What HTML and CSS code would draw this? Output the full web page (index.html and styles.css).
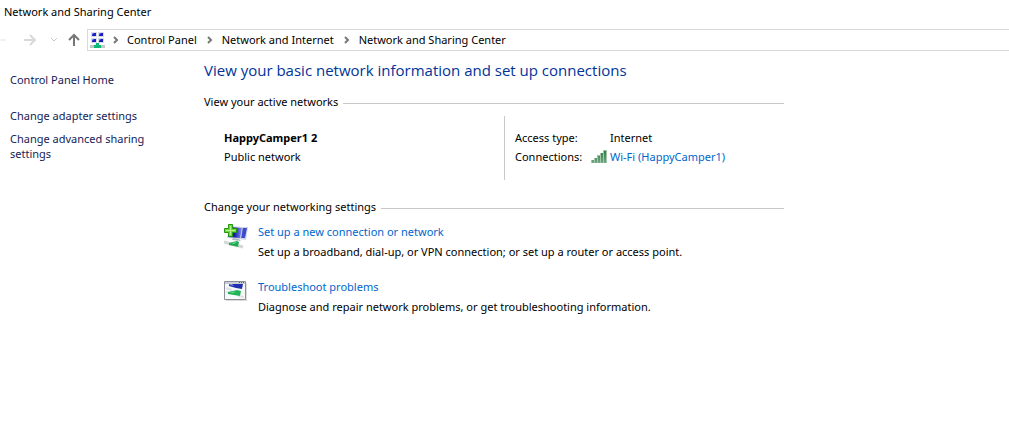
FILE: index.html
```html
<!DOCTYPE html>
<html lang="en">
<head>
<meta charset="utf-8">
<title>Network and Sharing Center</title>
<link rel="stylesheet" href="styles.css">
</head>
<body>
<header class="titlebar">Network and Sharing Center</header>
<div class="toolbar">
  <button class="nav back" aria-label="Back"><svg width="14" height="14" viewBox="0 0 14 14"><path d="M1 7h12"/></svg></button>
  <button class="nav forward" aria-label="Forward"><svg width="14" height="14" viewBox="0 0 14 14"><path d="M7 2l5 5-5 5M1 7h11"/></svg></button>
  <button class="nav recent" aria-label="Recent locations"><svg width="8" height="6" viewBox="0 0 8 6"><path d="M1 1l3 3 3-3"/></svg></button>
  <button class="nav up" aria-label="Up"><svg width="14" height="14" viewBox="0 0 14 14"><path d="M2 7l5-5 5 5M7 2v11"/></svg></button>
  <nav class="address" aria-label="Address">
    <svg class="place" width="16" height="17" viewBox="0 0 16 17">
      <path fill="#d7dbe8" d="M1 0h6v5H1zM8 0h6v5H8zM1 6h6v5H1zM8 6h6v5H8z"/>
      <path fill="#1c1cc0" d="M2 1h4v3H2zM9 1h4v3H9zM2 7h4v3H2zM9 7h4v3H9z"/>
      <path fill="#8196ec" d="M2 1h2L2 3zM9 1h2L9 3zM2 7h2L2 9zM9 7h2L9 9z"/>
      <path fill="#c3c8c6" d="M0 13h15v3H0z"/>
      <path fill="#0dbb76" d="M6 11h3v2h2v3H4v-3h2z"/>
    </svg>
    <svg class="chevron" width="6" height="8" viewBox="0 0 6 8"><path d="M1 1l3 3-3 3"/></svg>
    <a href="#">Control Panel</a>
    <svg class="chevron" width="6" height="8" viewBox="0 0 6 8"><path d="M1 1l3 3-3 3"/></svg>
    <a href="#">Network and Internet</a>
    <svg class="chevron" width="6" height="8" viewBox="0 0 6 8"><path d="M1 1l3 3-3 3"/></svg>
    <a href="#">Network and Sharing Center</a>
  </nav>
</div>
<div class="page">
  <aside class="side">
    <a class="home" href="#">Control Panel Home</a>
    <a href="#">Change adapter settings</a>
    <a href="#">Change advanced sharing settings</a>
  </aside>
  <main class="content">
    <h1>View your basic network information and set up connections</h1>
    <section>
      <h2>View your active networks</h2>
      <div class="network">
        <div class="identity">
          <strong>HappyCamper1 2</strong>
          <span>Public network</span>
        </div>
        <dl class="details">
          <dt>Access type:</dt>
          <dd>Internet</dd>
          <dt>Connections:
            <svg width="16" height="13" viewBox="0 0 16 13">
              <defs><linearGradient id="bar" x1="0" y1="0" x2="0" y2="1"><stop offset="0" stop-color="#2c7c44"/><stop offset="1" stop-color="#71a982"/></linearGradient></defs>
              <path fill="#a5c4ae" d="M0 10h3V8h3V5h3V3h3V0h4v13H0z"/>
              <path fill="url(#bar)" d="M1 10h2v3H1zM4 8h2v5H4zM7 6h2v7H7zM10 3h2v10h-2zM13 1h2v12h-2z"/>
            </svg>
          </dt>
          <dd><a href="#">Wi-Fi (HappyCamper1)</a></dd>
        </dl>
      </div>
    </section>
    <section>
      <h2>Change your networking settings</h2>
      <div class="task">
        <svg width="24" height="26" viewBox="0 0 24 26">
          <defs><linearGradient id="screen" x1="0" y1="0" x2="1" y2="0"><stop offset="0" stop-color="#1b20a8"/><stop offset=".5" stop-color="#1b20b3"/><stop offset="1" stop-color="#8797ef"/></linearGradient></defs>
          <path fill="#cfd4ea" d="M16 3l8 0-2 13-8-1z"/>
          <path fill="#3c4ccd" d="M18 4l5 0-2 10-5 0z"/>
          <path fill="#d3d5e2" d="M6 2l13 1-2 12-14-1z"/>
          <path fill="url(#screen)" d="M6 3l12 1-2 10-12-1z"/>
          <path fill="#b5b9bf" d="M9 14l6 1 2 2-9-1z"/>
          <path fill="none" stroke="#d3d8d6" stroke-width="3" d="M0 18l7 2 12 3"/>
          <path fill="#1eab55" d="M5 19l8-2 2 1-1 4 1 1-5-1-5-1z"/>
          <path fill="#6ddb88" d="M7 19l6-1-3 2z"/>
          <path fill="#6cdb39" stroke="#279314" d="M4.500 .5h4v4h4v4h-4v4h-4v-4h-4v-4h4z"/>
          <path fill="#b6f48b" d="M6 2h1v4h4v1H7v4H6V7H2V6h4z"/>
        </svg>
        <div>
          <a href="#">Set up a new connection or network</a>
          <p>Set up a broadband, dial-up, or VPN connection; or set up a router or access point.</p>
        </div>
      </div>
      <div class="task">
        <svg width="24" height="26" viewBox="0 0 24 26">
          <path fill="#dcdcdc" d="M2 4h21v18H2z"/>
          <path fill="#f8f9fa" stroke="#8b9095" d="M.5 2.500h21v18H.5z"/>
          <path fill="#c9ced4" d="M1 3h20v2H1z"/>
          <path fill="#555d66" d="M15 3h1v1h-1zM17 3h1v1h-1zM19 3h1v1h-1z"/>
          <path fill="#202eaf" d="M5 5h14l-1 5-6-1-7-2z"/>
          <path fill="#8795df" d="M5 5h3l2 2-4-1z"/>
          <path fill="none" stroke="#dfe2e4" stroke-width="2" d="M2 9l6 2M2 13l4 1M14 17l6 1"/>
          <path fill="#20b35a" d="M4 13l9-2 4 1-1 5-6-1-6-1z"/>
          <path fill="#85dfa0" d="M6 14l6-2-3 2z"/>
        </svg>
        <div>
          <a href="#">Troubleshoot problems</a>
          <p>Diagnose and repair network problems, or get troubleshooting information.</p>
        </div>
      </div>
    </section>
  </main>
</div>
</body>
</html>
```
FILE: styles.css
```css
* { box-sizing: border-box; }
body {
  margin: 0;
  background: #fff;
  color: #000;
  font: 11px/16px "Noto Sans", "Open Sans", sans-serif;
}
a { color: #0066cc; text-decoration: none; }
a:hover { text-decoration: underline; }
h1, h2, p, dl, dd { margin: 0; }

.titlebar { padding: 4px; height: 29px; }

.toolbar { display: flex; align-items: center; height: 22px; }
.nav {
  display: flex;
  justify-content: center;
  flex: none;
  padding: 0;
  border: 0;
  background: none;
}
.nav svg, .chevron { fill: none; stroke: #d9d9d9; stroke-width: 2; }
.back { width: 6px; overflow: hidden; justify-content: flex-end; }
.forward { width: 20px; margin-left: 14px; }
.recent { width: 12px; margin-left: 8px; }
.up { width: 16px; margin-left: 6px; }
.nav.recent svg { stroke: #c8c8c8; stroke-width: 1; }
.nav.up svg { stroke: #777; }
.address {
  display: flex;
  align-items: center;
  flex: 1;
  height: 22px;
  margin-left: 5px;
  padding-left: 2px;
  border: 1px solid #d9d9d9;
  border-right: 0;
  white-space: nowrap;
}
.address a { color: #000; }
.address .chevron { flex: none; margin: 0 9px 0 10px; stroke: #777; stroke-width: 2; }
.address .place + .chevron { margin: 0 8px 0 7px; }

.page { display: flex; padding-top: 9px; }
.side {
  display: flex;
  flex-direction: column;
  flex: none;
  width: 204px;
  padding: 12px 44px 0 10px;
  gap: 8px;
  line-height: 15px;
}
.side a { color: #151c55; }
.side .home { margin-bottom: 13px; }

.content { flex: 1; max-width: 580px; }
h1 { color: #003399; font: 400 15px/20px "Open Sans", "Noto Sans", sans-serif; }
h2 {
  display: flex;
  align-items: center;
  gap: 5px;
  margin-top: 14px;
  font-size: 11px;
  font-weight: 400;
}
h2::after { content: ""; flex: 1; height: 1px; margin-top: 2px; background: #c8c8c8; }
.network { display: flex; margin: 6px 0 19px; line-height: 19px; }
.identity {
  display: flex;
  flex-direction: column;
  width: 301px;
  padding: 12px 20px 14px;
  border-right: 1px solid #c8c8c8;
}
.details {
  display: grid;
  grid-template-columns: 95px 1fr;
  align-content: start;
  padding: 12px 0 14px 10px;
}
.details dt { display: flex; align-items: center; justify-content: space-between; padding-right: 3px; }
.task { display: flex; gap: 10px; padding: 9px 0 10px 20px; }
.task svg { flex: none; }
.task p { margin-top: 4px; }
```
